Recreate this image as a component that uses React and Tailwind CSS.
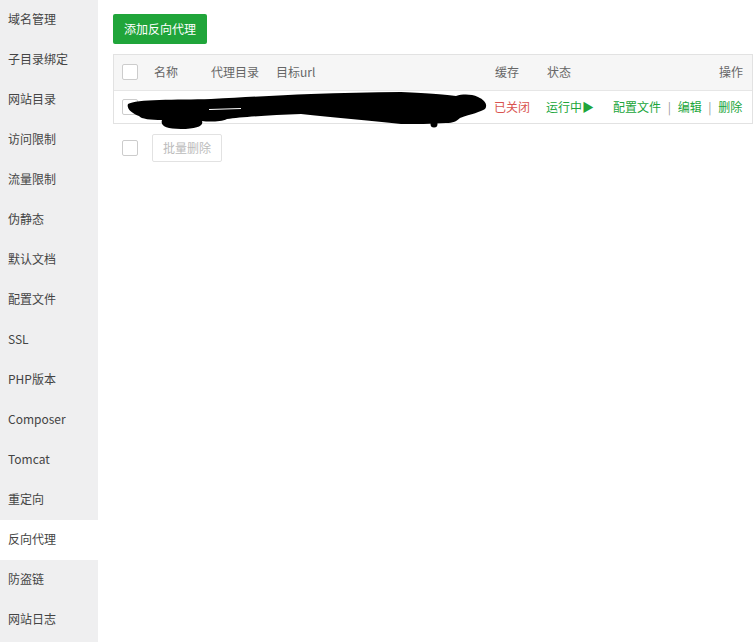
const MENU = [
  "域名管理",
  "子目录绑定",
  "网站目录",
  "访问限制",
  "流量限制",
  "伪静态",
  "默认文档",
  "配置文件",
  "SSL",
  "PHP版本",
  "Composer",
  "Tomcat",
  "重定向",
  "反向代理",
  "防盗链",
  "网站日志",
];

function Box() {
  return <span className="block h-4 w-4 rounded-[2px] border border-[#cccccc] bg-white" />;
}

export default function App() {
  return (
    <div
      className="flex h-[642px] w-[754px] overflow-hidden bg-white text-[12px] text-[#555]"
      style={{ fontFamily: '"Noto Sans CJK SC", "Noto Sans", sans-serif' }}
    >
      <aside className="w-[98px] shrink-0 bg-[#efeff0]">
        {MENU.map((m) => (
          <div
            key={m}
            className={
              "flex h-10 items-center pb-[2px] pl-2 text-[12px] text-[#444] " +
              (m === "反向代理" ? "bg-white" : "")
            }
          >
            {m}
          </div>
        ))}
      </aside>

      <main className="flex-1 pl-[15px] pt-[14px]">
        <button className="h-[30px] w-[94px] rounded-[2px] bg-[#20a53a] text-[12px] text-white">
          添加反向代理
        </button>

        <div className="mt-[10px] w-[640px] border border-[#e2e2e2]">
          <div className="flex h-[35px] items-center bg-[#f6f6f6] pb-[1px] text-[#666]">
            <div className="w-[40px] pl-[8px]">
              <Box />
            </div>
            <div className="w-[57px]">名称</div>
            <div className="w-[65px]">代理目录</div>
            <div className="w-[219px]">目标url</div>
            <div className="w-[52px]">缓存</div>
            <div className="flex-1">状态</div>
            <div className="pr-[9px]">操作</div>
          </div>
          <div className="relative flex h-[33px] items-center border-t border-[#e6e6e6]">
            <div className="w-[40px] pl-[8px]">
              <Box />
            </div>
            <div className="w-[340px]" />
            <div className="w-[52px] text-[#d9534f]">已关闭</div>
            <div className="w-[67px] text-[#20a53a]">运行中▶</div>
            <div className="flex-1 text-[#20a53a]">
              配置文件 <span className="mx-[4px] text-[#999]">|</span> 编辑{" "}
              <span className="mx-[4px] text-[#999]">|</span> 删除
            </div>
            <svg
              className="pointer-events-none absolute left-0 top-0"
              width="640"
              height="80"
              viewBox="113 90 640 80"
            >
              <path
                d="M127 103 C 135 98, 175 99, 210 98 C 250 96, 280 94, 310 93 C 340 92, 370 91, 400 91 C 430 92, 445 94, 455 95 C 462 93, 470 93, 477 96 C 484 99, 487 104, 484 108 C 480 111, 470 113, 459 117 C 456 120, 452 122, 445 122 C 430 123, 415 123, 400 123 C 370 120, 330 116, 300 113 C 270 114, 240 116, 226 118 C 220 121, 207 121, 201 120 C 203 125, 195 128, 180 128 C 165 128, 159 125, 161 119 C 150 119, 140 118, 138 115 C 132 113, 125 108, 127 103 Z"
                fill="#000"
              />
              <circle cx="433" cy="123" r="3.5" fill="#000" />
              <path d="M208 108.5 L 240 107.5" stroke="#fff" strokeWidth="1.2" />
            </svg>
          </div>
        </div>

        <div className="mt-[10px] flex items-center">
          <div className="pl-[9px]">
            <Box />
          </div>
          <button className="ml-[14px] h-[28px] w-[70px] rounded-[2px] border border-[#e2e2e2] bg-white text-[12px] text-[#bbb]">
            批量删除
          </button>
        </div>
      </main>
    </div>
  );
}
